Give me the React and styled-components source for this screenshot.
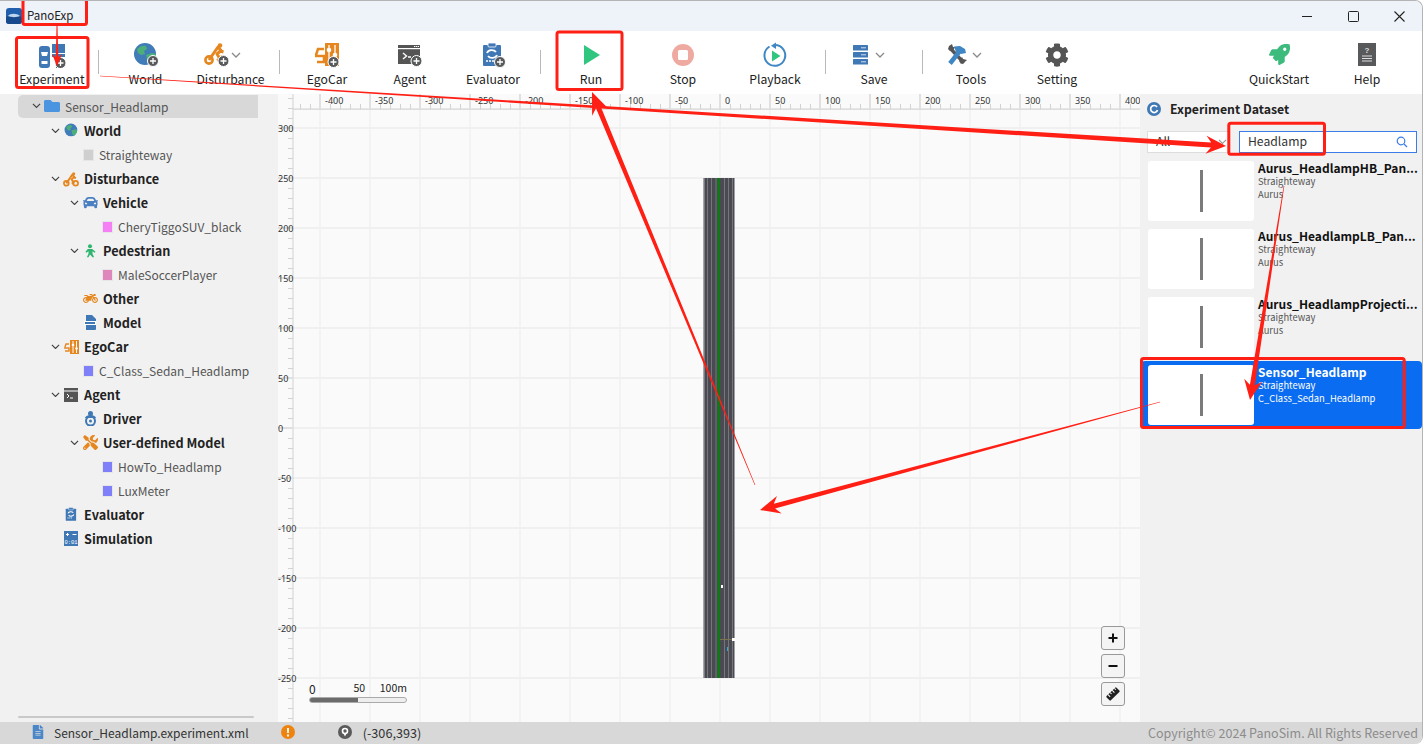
import React from "react";
import styled, { createGlobalStyle } from "styled-components";
import { FaCar, FaMotorcycle, FaTools, FaRocket, FaCog, FaFileAlt, FaFolder } from "react-icons/fa";

const GlobalStyle = createGlobalStyle`
  html, body { margin: 0; padding: 0; background: #fff; }
  body { font-family: "Noto Sans CJK SC", "Noto Sans", "Liberation Sans", sans-serif; color: #222; }
`;

const Win = styled.div`
  position: relative; width: 1423px; height: 744px; overflow: hidden; display: flex; flex-direction: column;
  box-sizing: border-box; border-top: 1px solid #b4b4b4; border-right: 1px solid #b4b4b4;
  border-top-right-radius: 8px; border-bottom-right-radius: 8px; background: #fff;
`;
const TitleBar = styled.div`
  height: 30px; flex: none; background: #eef2f9; display: flex; align-items: center; padding: 0 0 0 6px; gap: 5px;
`;
const AppName = styled.span`font-size: 11.5px; color: #222; flex: 1; position: relative; top: -1px;`;
const WinBtn = styled.div`
  width: 46px; height: 30px; display: flex; align-items: center; justify-content: center;
  margin-left: ${p => p.$ml || 0}px;
`;
const Toolbar = styled.div`
  height: 63px; flex: none; background: #fff; display: flex; align-items: stretch; gap: 10px; padding: 0 17px 0 16px;
`;
const Tool = styled.div`
  width: ${p => p.$w}px; flex: none; display: flex; flex-direction: column; align-items: center;
`;
const ToolIcon = styled.div`
  height: 27px; margin-top: 10px; display: flex; align-items: center; justify-content: center;
  gap: ${p => p.$gap || 0}px; padding-right: ${p => p.$pr || 0}px;
`;
const ToolLabel = styled.div`font-size: 12.2px; line-height: 18px; margin-top: 2px; color: #222; white-space: nowrap;`;
const Sep = styled.div`width: 1px; height: 24px; background: #b9b9b9; flex: none; align-self: flex-start; margin-top: 19px;`;
const Spacer = styled.div`flex: 1;`;

const Main = styled.div`flex: 1; min-height: 0; display: flex;`;
const Left = styled.div`
  width: 278px; flex: none; background: #f1f1f1; display: flex; flex-direction: column; padding-top: 1px; box-sizing: border-box;
`;
const Tree = styled.div`flex: 1;`;
const HScroll = styled.div`height: 2px; width: 236px; margin: 0 0 4px 18px; background: #c9c9c9; border-radius: 1px;`;
const Row = styled.div`
  height: 24px; display: flex; align-items: center; box-sizing: border-box;
  padding-left: ${p => 30 + 19 * p.$level}px; padding-bottom: 1px;
  ${p => p.$root ? `background: #d8d8d8; width: 240px; margin-left: 18px; padding-left: 12px; border-radius: 5px 0 0 5px; height: 23px; margin-bottom: 1px;` : ""}
`;
const CaretBox = styled.div`width: 12px; flex: none; display: flex; align-items: center; justify-content: center;`;
const IconBox = styled.div`width: 16px; margin-left: 2px; margin-right: 5px; flex: none; display: flex; align-items: center; justify-content: center;`;
const Swatch = styled.div`
  width: 9px; height: 10px; margin-left: 3px; margin-right: 5px; flex: none; background: ${p => p.$c}; border: 1px solid #e6e6e6; box-sizing: content-box;
`;
const RowText = styled.span`
  font-size: ${p => (p.$bold ? 12.7 : 12)}px; white-space: nowrap; color: ${p => (p.$bold ? "#222" : "#555")}; font-weight: ${p => (p.$bold ? 700 : 400)};
`;

const Canvas = styled.div`flex: 1; min-width: 0; position: relative; background: #fafafa;`;
const Plot = styled.svg`display: block; width: 100%; height: 100%;`;
const ScaleBox = styled.div`position: absolute; left: 31px; bottom: 19px; width: 98px;`;
const ScaleLabels = styled.div`display: flex; justify-content: space-between; align-items: flex-end; font-size: 10.5px; line-height: 14px; color: #222;`;
const ScaleZero = styled.span`font-size: 12px; line-height: 14px; position: relative; top: 1px;`;
const ScaleMid = styled.span`margin-left: 23px;`;
const ScaleBar = styled.div`height: 4px; margin-top: 2px; border: 1px solid #aaa; border-radius: 3px; background: linear-gradient(90deg, #6b6b6b 50%, #eee 50%);`;
const ZoomCol = styled.div`position: absolute; right: 15px; bottom: 16px; display: flex; flex-direction: column; gap: 4px;`;
const ZoomBtn = styled.div`
  width: 22px; height: 22px; border: 1px solid #999; border-radius: 3px; background: #f4f4f4; display: flex; align-items: center; justify-content: center;
`;

const Right = styled.div`width: 282px; flex: none; background: #f1f1f1; display: flex; flex-direction: column;`;
const PanelHead = styled.div`height: 30px; display: flex; align-items: center; gap: 9px; padding: 0 0 3px 7px; box-sizing: border-box; margin-top: 1px;`;
const PanelTitle = styled.span`font-size: 12.3px; font-weight: 700; color: #222;`;
const Filters = styled.div`display: flex; gap: 10px; padding: 6px 5px 0 7px; height: 22px;`;
const Select = styled.div`
  height: 20px; background: #fff; border: 1px solid #ddd; display: flex; align-items: center; justify-content: space-between; padding: 0 1px 0 8px; width: 71px;
  font-size: 12.2px; color: #333;
`;
const Search = styled.div`
  flex: 1; background: #fff; border: 1px solid #3b7de8; height: 20px; display: flex; align-items: center; justify-content: space-between; padding: 0 8px; font-size: 12.2px; color: #333;
`;
const FieldText = styled.span`position: relative; top: -1px;`;
const Cards = styled.div`display: flex; flex-direction: column; padding: 4px 0 0 1px;`;
const Card = styled.div`
  height: 68px; display: flex; align-items: center; gap: 4px; padding: 0 0 0 7px; box-sizing: border-box; border-radius: 4px;
  background: ${p => (p.$sel ? "#0a6cf0" : "transparent")}; color: ${p => (p.$sel ? "#fff" : "#111")};
`;
const Thumb = styled.div`width: 106px; height: 60px; background: #fff; border-radius: 3px; flex: none; display: flex; align-items: center; justify-content: center;`;
const ThumbRoad = styled.div`width: 3px; height: 42px; background: #7b7b7b;`;
const CardBody = styled.div`flex: 1; min-width: 0; height: 60px; padding-right: 3px; margin-top: -1px;`;
const CardTitle = styled.div`font-size: 12px; font-weight: 700; line-height: 14px; white-space: nowrap;`;
const CardSub = styled.div`font-size: 9.4px; line-height: 13px; color: ${p => (p.$sel ? "#fff" : "#555")}; white-space: nowrap;`;

const Status = styled.div`
  height: 22px; flex: none; background: #d8d8d8; display: flex; align-items: center; font-size: 12px; color: #333; padding: 0 4px 2px 31px; box-sizing: border-box;
`;
const StatusText = styled.span`margin-left: ${p => p.$ml || 0}px; white-space: nowrap; font-size: ${p => p.$fs || 12}px;`;
const StatusIcon = styled.div`margin-left: ${p => p.$ml || 0}px; display: flex; align-items: center; justify-content: center;`;
const Copy = styled.span`margin-left: auto; color: #8c8c8c; white-space: nowrap; font-size: 12.5px;`;
const Overlay = styled.svg`position: absolute; left: 0; top: -1px; width: 1423px; height: 744px; pointer-events: none;`;

const Badge = ({ x, y, r = 5.5 }) => (
  <g>
    <circle cx={x} cy={y} r={r} fill="#58595b" stroke="#fff" strokeWidth="1" />
    <path d={`M${x - 3} ${y}h6M${x} ${y - 3}v6`} stroke="#fff" strokeWidth="1.3" />
  </g>
);

const Globe = ({ s = 26, badge }) => (
  <svg width={s} height={s} viewBox="0 0 26 26">
    <circle cx="12" cy="12" r="11" fill="#3f7cb8" />
    <path d="M4 7c3-3 6-4 9-3l1 3-3 2 1 3-4 1-3-2zM13 13l6-2 4 1-1 5-4 5-3-1-1-4z" fill="#4caf7a" />
    {badge && <Badge x={20} y={19} />}
  </svg>
);
const ExperimentIcon = () => (
  <svg width="28" height="26" viewBox="0 0 28 26">
    <rect x="1" y="4" width="11" height="22" rx="3" fill="#3f78b5" />
    <path d="M3 10h7l-1 4H4zM3.500 19h6v3h-6z" fill="#fff" />
    <rect x="14" y="2" width="13" height="9" fill="#3f78b5" />
    <rect x="14" y="12" width="13" height="3" fill="#3f78b5" />
    <rect x="18" y="15" width="3" height="11" fill="#555" />
    <Badge x={22.5} y={21} />
  </svg>
);
const CyclistPath = ({ c = "#e6861f" }) => (
  <g>
    <circle cx="5" cy="18" r="3.600" fill="none" stroke={c} strokeWidth="2.600" />
    <circle cx="19" cy="18" r="3.600" fill="none" stroke={c} strokeWidth="2.600" />
    <circle cx="16" cy="3.500" r="2.300" fill={c} />
    <path d="M5 18l5.500-8L14 5l3 3.500-4 3.500 3 5-3 1.500M15 8.500l4.500 1.500" fill="none" stroke={c} strokeWidth="3" strokeLinejoin="round" />
  </g>
);
const DisturbIcon = () => (
  <svg width="25" height="25" viewBox="0 0 25 25">
    <CyclistPath />
    <Badge x={19.5} y={19} />
  </svg>
);
const CyclistSmall = () => (
  <svg width="16" height="16" viewBox="0 0 24 23"><CyclistPath /></svg>
);
const EgoIcon = () => (
  <svg width="26" height="26" viewBox="0 0 26 26">
    <path d="M2 13l2-6h6M1 14h9v6H3" fill="none" stroke="#e6861f" strokeWidth="2.500" />
    <rect x="11" y="1" width="14" height="23" fill="#e6861f" />
    <path d="M15 3v18M21 3v18" stroke="#fff" strokeWidth="1.300" />
    <circle cx="15" cy="8" r="2.300" fill="#fff" />
    <circle cx="21" cy="13" r="2.300" fill="#fff" />
    <Badge x={19.5} y={20} />
  </svg>
);
const AgentIcon = () => (
  <svg width="26" height="26" viewBox="0 0 26 26">
    <rect x="1" y="3" width="22" height="19" fill="#555" />
    <rect x="1" y="6" width="22" height="1.200" fill="#fff" />
    <path d="M17 4.500h5" stroke="#fff" strokeWidth="1" strokeDasharray="1.400 .6" />
    <path d="M6 11l3.500 3-3.500 3M11 15h3" fill="none" stroke="#fff" strokeWidth="1.400" />
    <Badge x={19.5} y={19} />
  </svg>
);
const EvalIcon = ({ s = 26, badge = true }) => (
  <svg width={s} height={s} viewBox="0 0 26 26">
    <rect x="3" y="3" width="18" height="21" rx="1" fill="#3f78b5" />
    <rect x="8" y="1" width="8" height="4" rx="1" fill="#3f78b5" stroke="#fff" strokeWidth=".8" />
    <path d="M7 11a5 4 0 0 1 9-1M17 13a5 4 0 0 1-9 1" fill="none" stroke="#fff" strokeWidth="1.800" />
    <path d="M6 19h9" stroke="#fff" strokeWidth="1.500" strokeDasharray="2 1" />
    {badge && <Badge x={20} y={20} />}
  </svg>
);
const RunIcon = () => (
  <svg width="26" height="26" viewBox="0 0 26 26"><path d="M6 3l16 10L6 23z" fill="#31c67f" /></svg>
);
const StopIcon = () => (
  <svg width="26" height="26" viewBox="0 0 26 26">
    <circle cx="13" cy="13" r="11" fill="#eeaaa0" />
    <rect x="8" y="8" width="10" height="10" rx="1.500" fill="#fff" />
  </svg>
);
const PlaybackIcon = () => (
  <svg width="26" height="26" viewBox="0 0 26 26">
    <path d="M7.500 4.500a10.400 10.400 0 1 1-4 4" fill="none" stroke="#3f86c4" strokeWidth="2" transform="rotate(30 13 14)" />
    <path d="M14 0.500v6.500l-5-3.200z" fill="#3f86c4" />
    <path d="M10 8.500l8.500 5.500L10 19.500z" fill="#31c67f" />
  </svg>
);
const SaveIcon = () => (
  <svg width="15" height="20" viewBox="0 0 15 20">
    {[0, 7, 14].map(y => (
      <g key={y}>
        <rect x="0" y={y} width="15" height="5.600" rx=".5" fill="#3f78b5" />
        <path d={`M8 ${y + 2.800}h5`} stroke="#cfe0f0" strokeWidth="1" />
      </g>
    ))}
  </svg>
);
const ToolsIcon = () => (
  <svg width="19" height="22" viewBox="0 0 19 22">
    <path d="M2 4l14 15" stroke="#555" strokeWidth="3.400" />
    <path d="M0 5l1-3 3-2 1 3 2 0-2 4-3 0zM13 20l5-3 1-1-4-1-1-2-3 4z" fill="#555" />
    <path d="M2 19.500L11 8" stroke="#3f86c4" strokeWidth="4.500" />
    <path d="M6 2.500l6-.5 5 3 1 4-5 1-2-1-3-1z" fill="#3f86c4" />
  </svg>
);
const HelpIcon = () => (
  <svg width="18" height="23" viewBox="0 0 18 23">
    <rect width="18" height="23" fill="#58595b" />
    <text x="9" y="9.500" fontSize="8" fontWeight="700" textAnchor="middle" fill="#ddd" fontFamily="Liberation Sans, sans-serif">?</text>
    <path d="M4 13h10M4 15.500h10M4 18h10" stroke="#ddd" strokeWidth="1.200" />
  </svg>
);
const Chevron = ({ c = "#8a8a8a", w = 10 }) => (
  <svg width={w} height={w * 0.6} viewBox="0 0 10 6">
    <path d="M1 1l4 4 4-4" fill="none" stroke={c} strokeWidth="1.300" />
  </svg>
);
const Person = () => (
  <svg width="14" height="14" viewBox="0 0 14 14">
    <circle cx="7" cy="2.200" r="2" fill="#2fb56f" />
    <path d="M4.800 5h4.400l3.300 2.700-.8 1-2.200-1.400v2.400l1.600 3.600h-1.600L7 10.600l-1.500 2.700H3.900l1.600-3.600V7.300L3.300 8.700l-.8-1z" fill="#2fb56f" />
  </svg>
);
const ModelIcon = () => (
  <svg width="13" height="15" viewBox="0 0 13 15">
    <path d="M2 0h6l4 4v10a1 1 0 0 1-1 1H2z" fill="#3f78b5" />
    <rect x="0" y="6" width="12" height="4" fill="#fff" />
    <rect x="1" y="7" width="10" height="2" fill="#3f78b5" />
  </svg>
);
const EgoSmall = () => (
  <svg width="15" height="14" viewBox="0 0 15 14">
    <path d="M1 7l1-3h3M0 8h5v3H1" fill="none" stroke="#e6861f" strokeWidth="1.400" />
    <rect x="6" y="0" width="9" height="14" fill="#e6861f" />
    <path d="M9 1v12M12.500 1v12" stroke="#fff" strokeWidth="1" />
    <circle cx="9" cy="5" r="1.300" fill="#fff" />
    <circle cx="12.500" cy="8.500" r="1.300" fill="#fff" />
  </svg>
);
const TermSmall = () => (
  <svg width="14" height="14" viewBox="0 0 14 14">
    <rect width="14" height="14" fill="#555" />
    <rect y="2.500" width="14" height="1" fill="#fff" />
    <path d="M3 6l2 2-2 2M6 10h3" stroke="#fff" strokeWidth="1" fill="none" />
  </svg>
);
const DriverIcon = () => (
  <svg width="15" height="15" viewBox="0 0 15 15">
    <circle cx="7.500" cy="2.500" r="2.500" fill="#3f78b5" />
    <path d="M2 7a5.500 3 0 0 1 11 0z" fill="#3f78b5" />
    <circle cx="7.500" cy="10" r="4.500" fill="none" stroke="#3f78b5" strokeWidth="2" />
    <circle cx="7.500" cy="10" r="1.500" fill="#3f78b5" />
  </svg>
);
const SimIcon = () => (
  <svg width="14" height="15" viewBox="0 0 14 15">
    <rect width="14" height="15" fill="#3f78b5" />
    <path d="M2 3.500h3M3.500 2v3M8.500 3.500h4" stroke="#fff" strokeWidth="1" />
    <text x="7" y="12.500" fontSize="5.500" textAnchor="middle" fill="#fff" fontFamily="Liberation Mono, monospace">0:01</text>
  </svg>
);

const tools = [
  { w: 72, label: "Experiment", icon: <ExperimentIcon /> },
  "sep",
  { w: 73, label: "World", icon: <Globe badge /> },
  { w: 77, label: "Disturbance", icon: <DisturbIcon />, caret: true, gap: 2, pr: 16 },
  "sep",
  { w: 74, label: "EgoCar", icon: <EgoIcon /> },
  { w: 72, label: "Agent", icon: <AgentIcon /> },
  { w: 74, label: "Evaluator", icon: <EvalIcon /> },
  "sep",
  { w: 80, label: "Run", icon: <RunIcon /> },
  { w: 84, label: "Stop", icon: <StopIcon /> },
  { w: 80, label: "Playback", icon: <PlaybackIcon /> },
  "sep",
  { w: 76, label: "Save", icon: <SaveIcon />, caret: true, gap: 7, pr: 11 },
  "sep",
  { w: 76, label: "Tools", icon: <ToolsIcon />, caret: true, gap: 5, pr: 13 },
  { w: 76, label: "Setting", icon: <FaCog size={24} color="#555" /> },
  "spacer",
  { w: 80, label: "QuickStart", icon: <FaRocket size={21} color="#3dbb7c" /> },
  { w: 76, label: "Help", icon: <HelpIcon /> },
];

const tree = [
  { l: 0, t: "Sensor_Headlamp", caret: true, root: true, icon: <FaFolder size={16} color="#4a94e0" /> },
  { l: 1, t: "World", caret: true, bold: true, icon: <Globe s={15} /> },
  { l: 2, t: "Straighteway", swatch: "#cfcfcf" },
  { l: 1, t: "Disturbance", caret: true, bold: true, icon: <CyclistSmall /> },
  { l: 2, t: "Vehicle", caret: true, bold: true, icon: <FaCar size={15} color="#4a7fc1" /> },
  { l: 3, t: "CheryTiggoSUV_black", swatch: "#f57ff5" },
  { l: 2, t: "Pedestrian", caret: true, bold: true, icon: <Person /> },
  { l: 3, t: "MaleSoccerPlayer", swatch: "#df86bd" },
  { l: 2, t: "Other", bold: true, icon: <FaMotorcycle size={15} color="#e6861f" /> },
  { l: 2, t: "Model", bold: true, icon: <ModelIcon /> },
  { l: 1, t: "EgoCar", caret: true, bold: true, icon: <EgoSmall /> },
  { l: 2, t: "C_Class_Sedan_Headlamp", swatch: "#7f7ff9" },
  { l: 1, t: "Agent", caret: true, bold: true, icon: <TermSmall /> },
  { l: 2, t: "Driver", bold: true, icon: <DriverIcon /> },
  { l: 2, t: "User-defined Model", caret: true, bold: true, icon: <FaTools size={15} color="#e6861f" /> },
  { l: 3, t: "HowTo_Headlamp", swatch: "#7f7ff9" },
  { l: 3, t: "LuxMeter", swatch: "#7f7ff9" },
  { l: 1, t: "Evaluator", bold: true, icon: <EvalIcon s={15} badge={false} /> },
  { l: 1, t: "Simulation", bold: true, icon: <SimIcon /> },
];

const cards = [
  { t: "Aurus_HeadlampHB_Pan...", a: "Straighteway", b: "Aurus" },
  { t: "Aurus_HeadlampLB_Pan...", a: "Straighteway", b: "Aurus" },
  { t: "Aurus_HeadlampProjecti...", a: "Straighteway", b: "Aurus" },
  { t: "Sensor_Headlamp", a: "Straighteway", b: "C_Class_Sedan_Headlamp", sel: true },
];

const range = (a, b, s) => { const r = []; for (let v = a; v <= b; v += s) r.push(v); return r; };

const RulerPlot = () => {
  const X = v => 442 + v;
  const Y = v => 334 - v;
  const xs = range(-400, 400, 50);
  const ys = range(-250, 300, 50);
  const xt = range(-420, 420, 10).filter(v => v % 50 !== 0);
  const yt = range(-290, 330, 10).filter(v => v % 50 !== 0);
  const laneLines = [3.500, 7.500, 12, 20.500, 24.500, 28.500];
  return (
    <Plot viewBox="0 0 862 628">
      {xs.map(v => <rect key={v} x={X(v) - 1} y="15" width="2" height="613" fill="#f3f3f3" />)}
      {ys.map(v => <rect key={v} x="15" y={Y(v) - 1} width="847" height="2" fill="#f0f0f0" />)}
      <rect x="14.500" y="0" width="1" height="628" fill="#d2d2d2" />
      <rect x="15" y="14.500" width="847" height="1.200" fill="#d2d2d2" />
      {xs.map(v => <rect key={v} x={X(v) - 1} y="0" width="2" height="15" fill="#e0e0e0" />)}
      {xt.map(v => <rect key={v} x={X(v)} y="10" width="1" height="5" fill="#d2d2d2" />)}
      {yt.map(v => <rect key={v} x="10" y={Y(v)} width="5" height="1" fill="#d2d2d2" />)}
      {ys.map(v => <rect key={v} x="0" y={Y(v) - 1} width="15" height="2" fill="#e0e0e0" />)}
      {xs.map(v => (
        <text key={v} x={X(v) + 5} y="9.500" fontSize="9" fill="#333" fontFamily="Noto Sans, sans-serif">{v}</text>
      ))}
      {ys.map(v => (
        <text key={v} x="0" y={Y(v) + 3.500} fontSize="9" fill="#333" fontFamily="Noto Sans, sans-serif">{v}</text>
      ))}
      <rect x="425.500" y="84" width="31" height="500" fill="#4a4a53" />
      <rect x="425.500" y="84" width="1" height="500" fill="#a9a9b0" />
      {laneLines.map(d => <rect key={d} x={425.500 + d} y="84" width="1" height="500" fill="#76767c" />)}
      <rect x="439.500" y="84" width="2.400" height="500" fill="#0d7d12" />
      <rect x="443" y="491" width="2" height="3" fill="#fff" />
      <rect x="442" y="545" width="13" height="1" fill="#7a7350" />
      <rect x="454" y="544" width="3" height="3" fill="#fff" />
      <rect x="449" y="553" width="1" height="4" fill="#3aa7d8" />
    </Plot>
  );
};

const arrow = (x1, y1, x2, y2, w0, w1, hw, hl) => {
  const L = Math.hypot(x2 - x1, y2 - y1);
  const ux = (x2 - x1) / L, uy = (y2 - y1) / L, nx = -uy, ny = ux;
  const bx = x2 - ux * hl, by = y2 - uy * hl;
  const nbx = x2 - ux * hl * 0.75, nby = y2 - uy * hl * 0.75;
  const p = [
    [x1 + nx * w0 / 2, y1 + ny * w0 / 2],
    [nbx + nx * w1 / 2, nby + ny * w1 / 2],
    [bx + nx * hw, by + ny * hw],
    [x2, y2],
    [bx - nx * hw, by - ny * hw],
    [nbx - nx * w1 / 2, nby - ny * w1 / 2],
    [x1 - nx * w0 / 2, y1 - ny * w0 / 2],
  ];
  return p.map(q => q.map(n => n.toFixed(1)).join(",")).join(" ");
};

const marks = [
  [23, -0.500, 63.500, 25], [16.500, 37.500, 71.500, 50], [557, 32, 65, 57.500], [1228.800, 123.200, 95.700, 31], [1141.500, 358.500, 262.700, 69],
];
const arrows = [
  [57, 26, 57, 66, 1, 2.500, 5, 12],
  [100, 76, 1226, 146, 0.6, 5, 9, 20],
  [755, 485, 592, 92, 0.6, 5, 9, 22],
  [1284, 186, 1250, 400, 0.6, 5, 9, 20],
  [1160, 402, 760, 510, 0.6, 5, 9, 20],
];

export default function App() {
  return (
    <Win>
      <GlobalStyle />
      <TitleBar>
        <svg width="16" height="16" viewBox="0 0 16 16">
          <rect width="16" height="16" rx="3" fill="#1f5fae" />
          <rect y="8" width="16" height="8" rx="3" fill="#174a8c" />
          <path d="M2 8c2-3 9-3 12 0-3 1.500-9 1.500-12 0z" fill="#bcd4ec" />
        </svg>
        <AppName>PanoExp</AppName>
        <WinBtn>
          <svg width="11" height="11" viewBox="0 0 11 11"><path d="M0 5.500h10" stroke="#222" strokeWidth="1.100" /></svg>
        </WinBtn>
        <WinBtn $ml={-5}>
          <svg width="11" height="11" viewBox="0 0 11 11"><rect x=".5" y=".5" width="10" height="10" rx="1" fill="none" stroke="#222" /></svg>
        </WinBtn>
        <WinBtn $ml={-5}>
          <svg width="11" height="11" viewBox="0 0 11 11"><path d="M.5.500l10 10M10.500.5l-10 10" stroke="#222" strokeWidth="1.100" /></svg>
        </WinBtn>
      </TitleBar>
      <Toolbar>
        {tools.map((t, i) => {
          if (t === "sep") return <Sep key={i} />;
          if (t === "spacer") return <Spacer key={i} />;
          return (
            <Tool key={t.label} $w={t.w}>
              <ToolIcon $gap={t.gap} $pr={t.pr}>
                {t.icon}
                {t.caret && <Chevron />}
              </ToolIcon>
              <ToolLabel>{t.label}</ToolLabel>
            </Tool>
          );
        })}
      </Toolbar>
      <Main>
        <Left>
          <Tree>
            {tree.map(n => (
              <Row key={n.t} $level={n.l} $root={n.root}>
                <CaretBox>{n.caret && <Chevron c="#444" w={9} />}</CaretBox>
                {n.swatch ? <Swatch $c={n.swatch} /> : <IconBox>{n.icon}</IconBox>}
                <RowText $bold={n.bold}>{n.t}</RowText>
              </Row>
            ))}
          </Tree>
          <HScroll />
        </Left>
        <Canvas>
          <RulerPlot />
          <ScaleBox>
            <ScaleLabels><ScaleZero>0</ScaleZero><ScaleMid>50</ScaleMid><span>100m</span></ScaleLabels>
            <ScaleBar />
          </ScaleBox>
          <ZoomCol>
            <ZoomBtn>
              <svg width="12" height="12" viewBox="0 0 12 12"><path d="M1.500 6h9M6 1.500v9" stroke="#111" strokeWidth="2" /></svg>
            </ZoomBtn>
            <ZoomBtn>
              <svg width="12" height="12" viewBox="0 0 12 12"><path d="M1.500 6h9" stroke="#111" strokeWidth="2" /></svg>
            </ZoomBtn>
            <ZoomBtn>
              <svg width="16" height="16" viewBox="0 0 16 16">
                <g transform="rotate(-45 8 8)">
                  <rect x="1" y="5" width="14" height="6" rx="1" fill="#222" />
                  <path d="M4 5v3M7 5v2M10 5v3M13 5v2" stroke="#fff" strokeWidth="1" />
                </g>
              </svg>
            </ZoomBtn>
          </ZoomCol>
        </Canvas>
        <Right>
          <PanelHead>
            <svg width="14" height="14" viewBox="0 0 14 14">
              <circle cx="7" cy="7" r="7" fill="#3f78b5" />
              <path d="M10 5a3.500 3.500 0 1 0 .5 3" fill="none" stroke="#fff" strokeWidth="1.700" />
            </svg>
            <PanelTitle>Experiment Dataset</PanelTitle>
          </PanelHead>
          <Filters>
            <Select><FieldText>All</FieldText><Chevron c="#999" w={9} /></Select>
            <Search>
              <FieldText>Headlamp</FieldText>
              <svg width="12" height="12" viewBox="0 0 12 12">
                <circle cx="5" cy="5" r="3.800" fill="none" stroke="#3b7de8" strokeWidth="1.200" />
                <path d="M8 8l3 3" stroke="#3b7de8" strokeWidth="1.200" />
              </svg>
            </Search>
          </Filters>
          <Cards>
            {cards.map(c => (
              <Card key={c.t} $sel={c.sel}>
                <Thumb><ThumbRoad /></Thumb>
                <CardBody>
                  <CardTitle>{c.t}</CardTitle>
                  <CardSub $sel={c.sel}>{c.a}</CardSub>
                  <CardSub $sel={c.sel}>{c.b}</CardSub>
                </CardBody>
              </Card>
            ))}
          </Cards>
        </Right>
      </Main>
      <Status>
        <FaFileAlt size={14} color="#4a86c8" />
        <StatusText $ml={9}>Sensor_Headlamp.experiment.xml</StatusText>
        <StatusIcon $ml={32}>
          <svg width="14" height="14" viewBox="0 0 14 14">
            <circle cx="7" cy="7" r="7" fill="#ee8410" />
            <path d="M7 3v5M7 9.500v2" stroke="#fff" strokeWidth="1.800" />
          </svg>
        </StatusIcon>
        <StatusIcon $ml={43}>
          <svg width="14" height="14" viewBox="0 0 14 14">
            <circle cx="7" cy="7" r="7" fill="#5a5a5a" />
            <circle cx="7" cy="6" r="2.500" fill="none" stroke="#fff" strokeWidth="1.600" />
            <path d="M5.200 8l1.800 3.500L8.800 8" fill="#fff" />
          </svg>
        </StatusIcon>
        <StatusText $ml={11} $fs={12.7}>(-306,393)</StatusText>
        <Copy>Copyright© 2024 PanoSim. All Rights Reserved</Copy>
      </Status>
      <Overlay viewBox="0 0 1423 744">
        {marks.map(([x, y, w, h]) => (
          <rect key={x} x={x} y={y} width={w} height={h} rx="2" fill="none" stroke="#ff1f14" strokeWidth="3" />
        ))}
        {arrows.map((a, i) => <polygon key={i} points={arrow(...a)} fill="#ff1f14" />)}
      </Overlay>
    </Win>
  );
}
